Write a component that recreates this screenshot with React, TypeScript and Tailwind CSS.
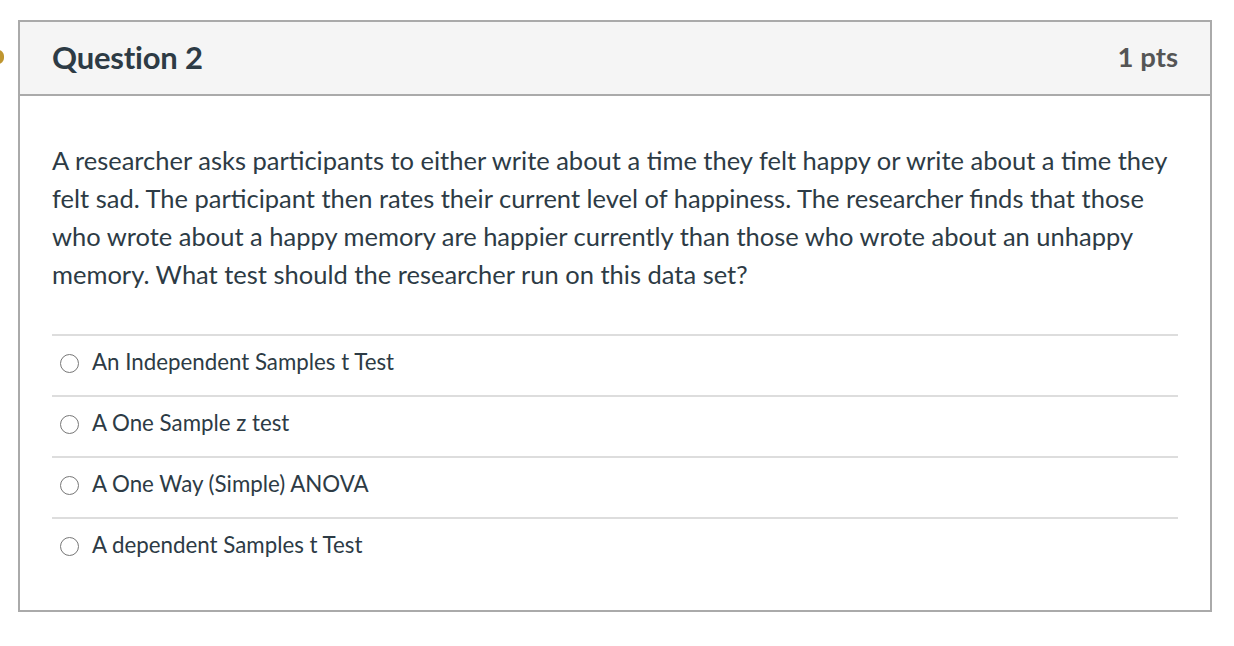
const answers = [
  "An Independent Samples t Test",
  "A One Sample z test",
  "A One Way (Simple) ANOVA",
  "A dependent Samples t Test",
];

export default function App() {
  return (
    <div className="relative w-[1234px] h-[646px] bg-white overflow-hidden font-['Lato','Liberation_Sans',sans-serif] text-[#2d3b45]">
      {/* bookmark marker peeking at left edge */}
      <div className="absolute left-[-8px] top-[50px] w-[12px] h-[14px] rounded-full bg-[#bf9630]" />

      <div className="ml-[18px] mt-[20px] w-[1194px] border-2 border-[#aaaaaa]">
        <div className="h-[74px] bg-[#f5f5f5] border-b-2 border-[#aaaaaa] flex items-center justify-between pl-[32px] pr-[32px] pb-[2px]">
          <h2 className="text-[31px] font-bold tracking-[-0.2px]">Question 2</h2>
          <span className="text-[27.5px] font-bold text-[#555555]">1 pts</span>
        </div>

        <div className="px-[32px] pt-[45px] pb-[32px]">
          <p className="text-[25.5px] leading-[38px]">
            A researcher asks participants to either write about a time they felt happy or write about a time they
            felt sad. The participant then rates their current level of happiness. The researcher finds that those
            who wrote about a happy memory are happier currently than those who wrote about an unhappy
            memory. What test should the researcher run on this data set?
          </p>

          <div className="mt-[41px]">
            {answers.map((a, i) => (
              <label
                key={i}
                className="flex items-center h-[61px] border-t-2 border-[#dddddd] pl-[8px] pb-[8px]"
              >
                <span className="w-[19px] h-[19px] rounded-full border-[1.5px] border-[#777777] bg-white shrink-0 mt-[3px]" />
                <span className="ml-[13px] text-[22.3px]">{a}</span>
              </label>
            ))}
          </div>
        </div>
      </div>
    </div>
  );
}
